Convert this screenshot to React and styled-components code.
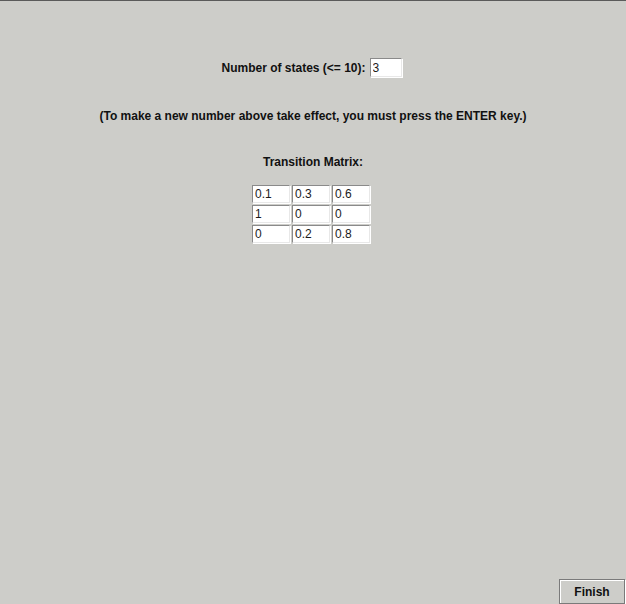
import styled, { createGlobalStyle } from "styled-components";

const Global = createGlobalStyle`
  html, body {
    margin: 0;
    padding: 0;
    background: #cdcdc9;
  }
  body {
    font-family: "Liberation Sans", Arial, sans-serif;
  }
`;

const matrix = [
    ['0.1', '0.3', '0.6'],
    ['1', '0', '0'],
    ['0', '0.2', '0.8'],
];

const Frame = styled.div`
  width: 626px;
  height: 604px;
  box-sizing: border-box;
  border-top: 1px solid #5a5a5a;
  background: #cdcdc9;
  display: flex;
  flex-direction: column;
  align-items: center;
  color: #111;
  font-size: 12px;
  font-weight: bold;
`;

const StatesRow = styled.div`
  display: flex;
  align-items: center;
  gap: 4px;
  margin-top: 57px;
  height: 19px;
  padding-right: 3px;
`;

const Label = styled.span`
  white-space: nowrap;
  margin-top: ${p => p.$top || 0}px;
`;

const Field = styled.input`
  box-sizing: border-box;
  width: ${p => p.$w}px;
  height: ${p => p.$h}px;
  margin: 0;
  padding: 0 2px;
  border: 1px solid #8a8a8a;
  border-right-color: #e8e8e8;
  border-bottom-color: #e8e8e8;
  box-shadow: inset 1px 1px 0 #fff, 1px 1px 0 #fff;
  background: #fff;
  font-family: "Liberation Sans", Arial, sans-serif;
  font-size: 12px;
  font-weight: normal;
  color: #1a1a1a;
  outline: none;
`;

const Matrix = styled.div`
  display: grid;
  grid-template-columns: repeat(3, 38px);
  grid-auto-rows: 18px;
  gap: 2px;
  margin-top: 16px;
  margin-right: 4px;
`;

const Footer = styled.div`
  margin-top: auto;
  align-self: flex-end;
  display: flex;
  padding-right: 1px;
`;

const Button = styled.button`
  box-sizing: border-box;
  width: 66px;
  height: 25px;
  margin: 0;
  padding: 0;
  background: #cdcdc9;
  border: 1px solid #7a7a7a;
  box-shadow: inset 1px 1px 0 #fff, 1px 1px 0 #fff;
  font-family: "Liberation Sans", Arial, sans-serif;
  font-size: 12px;
  font-weight: bold;
  color: #111;
`;

export default function App() {
    return (
        <>
            <Global/>
            <Frame>
                <StatesRow>
                    <Label>Number of states (&lt;= 10):</Label>
                    <Field $w={32} $h={19} defaultValue="3"/>
                </StatesRow>
                <Label $top={32}>(To make a new number above take effect, you must press the ENTER key.)</Label>
                <Label $top={32}>Transition Matrix:</Label>
                <Matrix>
                    {matrix.flat().map((v, i) => <Field key={i} $w={38} $h={18} defaultValue={v}/>)}
                </Matrix>
                <Footer>
                    <Button>Finish</Button>
                </Footer>
            </Frame>
        </>
    );
}
